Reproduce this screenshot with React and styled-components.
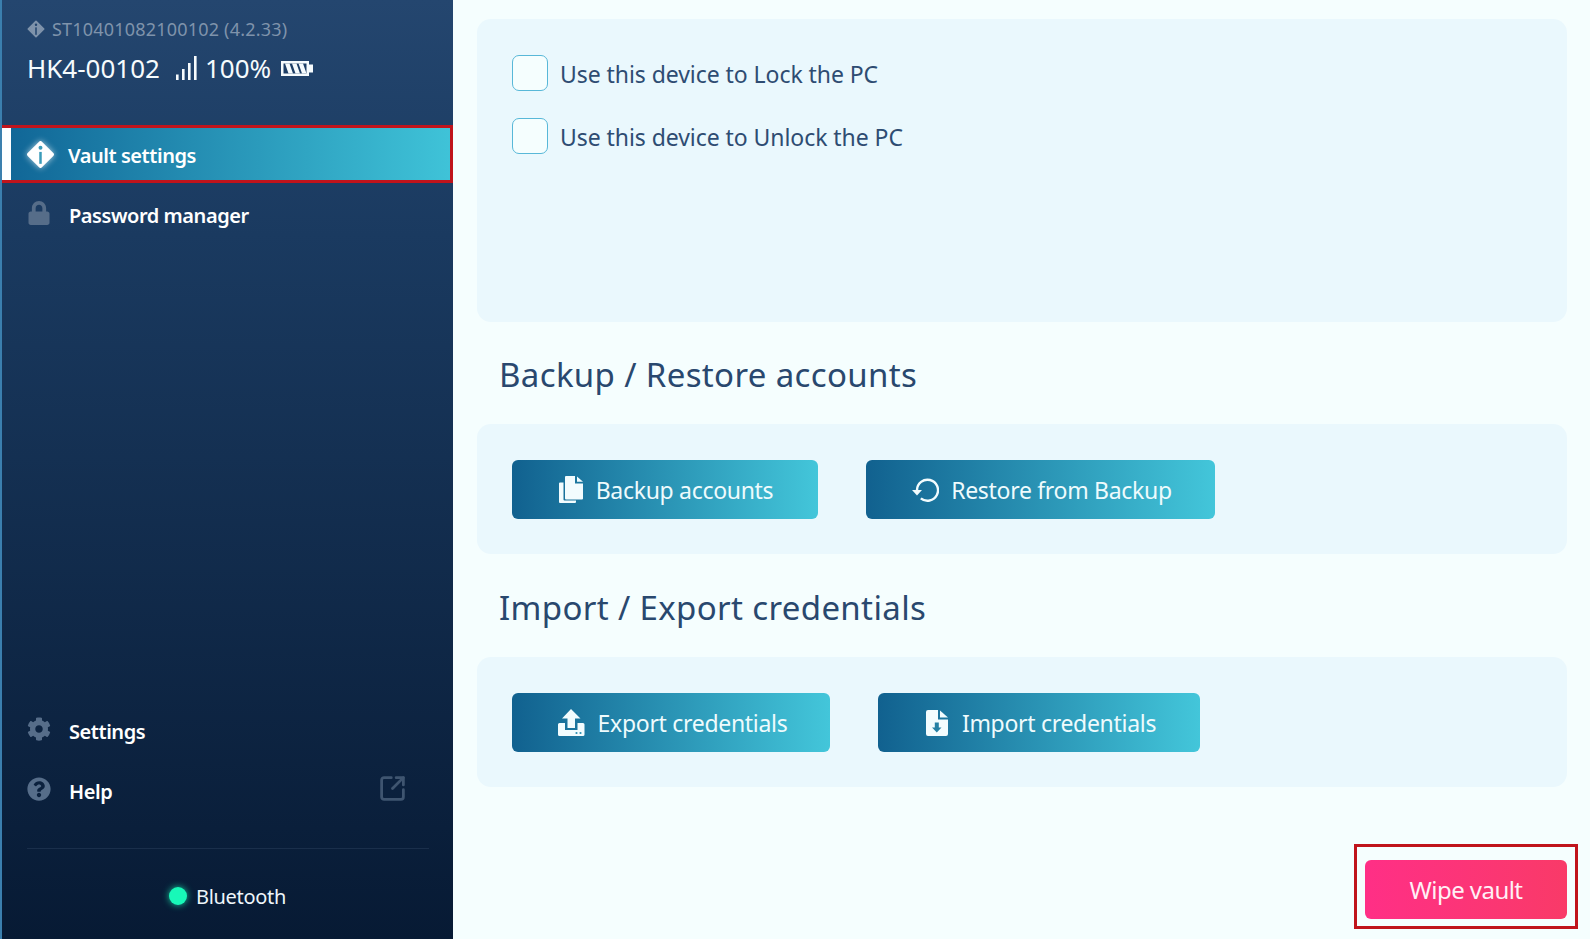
import React from "react";
import styled, { createGlobalStyle } from "styled-components";
import { FaLock, FaCog, FaQuestionCircle } from "react-icons/fa";
import { SquareArrowOutUpRight } from "lucide-react";

const Global = createGlobalStyle`
  html, body { margin: 0; padding: 0; height: 100%; overflow: hidden; }
  body { font-family: "Noto Sans", "Open Sans", "Liberation Sans", sans-serif; background: #f5fefe; }
`;
const Page = styled.div`display: flex; width: 1590px; height: 939px; overflow: hidden;`;
const Sidebar = styled.aside`
  width: 453px; height: 939px; flex: none; display: flex; flex-direction: column; box-sizing: border-box;
  background: linear-gradient(180deg, #24466f 0%, #1a3a60 25%, #071a34 100%);
  border-left: 2px solid #3b7fae; color: #fff;
`;
const Head = styled.div`padding: 17px 0 0 25px; height: 125px; box-sizing: border-box; flex: none;`;
const Serial = styled.div`display: flex; align-items: center; gap: 7px; font-size: 18px; line-height: 24px; color: #7f93ab; letter-spacing: 0.2px;`;
const DeviceRow = styled.div`display: flex; align-items: center; margin-top: 10px; font-size: 26px; line-height: 34px; color: #f6fbfd;`;
const DeviceName = styled.span`margin-right: 16px;`;
const Percent = styled.span`margin: 0 10px 0 8px;`;
const Nav = styled.nav`display: flex; flex-direction: column;`;
const NavItem = styled.div`
  display: flex; align-items: center; box-sizing: border-box; height: 60px; padding-left: 25px; font-size: 20px; font-weight: 600; letter-spacing: -0.45px; color: #fff;
`;
const ActiveItem = styled(NavItem)`
  height: 58px; width: 451px; margin-bottom: 2px; padding: 2px 0 0 23px;
  background: linear-gradient(90deg, #106596 0%, #3fc3d8 100%);
  border: 3px solid #c0141c; border-left: 0; box-shadow: inset 9px 0 0 #fdfeff;
`;
const NavIcon = styled.span`width: 42px; flex: none; display: flex; align-items: center; color: #566d89; font-size: 24px; position: relative; top: -2px;`;
const ActiveIcon = styled(NavIcon)`width: 42px; top: -1px; margin-left: 1px; filter: drop-shadow(0 0 3px #ffffffb0);`;
const Grow = styled.div`flex: 1;`;
const External = styled.span`margin-left: auto; margin-right: 46px; color: #3f5570; display: flex; position: relative; top: -3px;`;
const Divider = styled.div`height: 1px; margin: 27px 24px 0 25px; background: #1a2f4b;`;
const Status = styled.div`display: flex; justify-content: center; align-items: center; gap: 9px; height: 90px; padding: 4px 0 0 0; box-sizing: border-box; font-size: 20px; letter-spacing: -0.3px; color: #eef6fb;`;
const Dot = styled.span`width: 18px; height: 18px; border-radius: 50%; background: #18f8b8; box-shadow: 0 0 7px #18f8b8cc;`;
const Main = styled.main`flex: 1; box-sizing: border-box; padding: 19px 23px 0 24px; display: flex; flex-direction: column;`;
const Card = styled.section`
  box-sizing: border-box; height: ${p => p.$h}px; border-radius: 14px; background: #eaf8fd; padding: 36px 35px;
  display: flex; ${p => p.$col ? "flex-direction: column; gap: 27px;" : "gap: 48px;"}
`;
const Heading = styled.h2`margin: 0; height: ${p => p.$h}px; box-sizing: border-box; padding: ${p => p.$h - 72}px 0 0 22px; font-size: 33px; line-height: 46px; font-weight: 400; color: #29486e; letter-spacing: 0.36px;`;
const Check = styled.label`display: flex; align-items: center; gap: 12px; font-size: 23px; line-height: 36px; color: #2e4c72; letter-spacing: -0.06px;`;
const CheckText = styled.span`position: relative; top: 1px;`;
const Box = styled.span`width: 36px; height: 36px; box-sizing: border-box; border: 1.5px solid #58b8d8; border-radius: 7px; background: #f5fefe;`;
const Button = styled.button`
  height: 59px; width: ${p => p.$w}px; flex: none; border: 0; border-radius: 6px; display: flex; align-items: center; justify-content: center; gap: ${p => p.$gap || 12.5}px;
  background: linear-gradient(90deg, #11618f 0%, #43c6da 100%); color: #eefbfd; font: 400 23px "Noto Sans", sans-serif; letter-spacing: -0.3px; padding: 0 0 0 ${p => p.$pl || 2.5}px;
`;
const Footer = styled.div`display: flex; justify-content: flex-end; margin-top: 57px; margin-right: -11px;`;
const WipeFrame = styled.div`border: 3px solid #c0141c; padding: 13px 8px 7px; display: flex;`;
const WipeButton = styled.button`
  width: 202px; height: 59px; border: 0; border-radius: 6px; background: linear-gradient(90deg, #ff2f86 0%, #f93a68 100%); color: #fff0f6; font: 400 24px "Noto Sans", sans-serif; letter-spacing: -0.55px; padding: 0;
`;

const Diamond = ({ size, color, info, inset = 3 }) => (
  <svg width={size} height={size} viewBox="0 0 28 28">
    <path d={`M14 ${inset} ${28 - inset} 14 14 ${28 - inset} ${inset} 14Z`} fill={color} stroke={color} strokeWidth={inset * 1.3} strokeLinejoin="round" />
    <circle cx="14" cy="7.5" r="1.9" fill={info} />
    <rect x="12.800" y="11.500" width="2.400" height="11.500" fill={info} />
  </svg>
);
const Signal = () => (
  <svg width="21" height="24" viewBox="0 0 21 24" fill="#f6fbfd">
    <rect x="0" y="18.500" width="2.600" height="5.500" />
    <rect x="6" y="13" width="2.600" height="11" />
    <rect x="12" y="7" width="2.600" height="17" />
    <rect x="18" y="0" width="2.600" height="24" />
  </svg>
);
const Battery = () => (
  <svg width="32" height="15" viewBox="0 0 32 15">
    <rect x="0" y="0" width="28" height="15" fill="#f6fbfd" />
    <rect x="2.500" y="2.500" width="23" height="10" fill="#1d3e66" />
    <path d="M4 2.500h4.500l3.500 10H7.500zM11 2.500h4.500l3.500 10h-4.500zM17.500 2.500h4.500l3.500 10h-4.500z" fill="#f6fbfd" />
    <rect x="28" y="3.500" width="4" height="8" fill="#f6fbfd" />
  </svg>
);
const CopyIcon = () => (
  <svg width="24" height="27" viewBox="0 0 24 27" fill="#f2fcfe">
    <path d="M1 6.500H4.500V23.500A1 1 0 0 0 5.500 24.500H17V26A1 1 0 0 1 16 27H1A1 1 0 0 1 0 26V7.500A1 1 0 0 1 1 6.500Z" />
    <path d="M7 0H16V7.500H24V22.500A1 1 0 0 1 23 23.500H7A1 1 0 0 1 6 22.500V1A1 1 0 0 1 7 0Z" />
    <path d="M18 0.500 24 5.800H18Z" />
  </svg>
);
const RestoreIcon = () => (
  <svg width="27" height="25" viewBox="0 0 27 25" fill="none">
    <path d="M5 13A10.500 10.500 0 1 1 8.800 21.300" stroke="#f2fcfe" strokeWidth="2.400" />
    <path d="M0 13H10L5 18.500Z" fill="#f2fcfe" />
  </svg>
);
const ExportIcon = () => (
  <svg width="28" height="27" viewBox="0 0 28 27" fill="#f2fcfe">
    <path d="M14 0 23.500 9.500H18V19H10.500V9.500H5Z" />
    <path d="M1 15.500A1.500 1.500 0 0 1 2.500 14H8V21H20.500V14H26A1.500 1.500 0 0 1 27.500 15.500V25.500A1.500 1.500 0 0 1 26 27H2.500A1.500 1.500 0 0 1 1 25.500Z" />
    <circle cx="19.500" cy="24" r="1.100" fill="#2b8fb2" /><circle cx="23.500" cy="24" r="1.100" fill="#2b8fb2" />
  </svg>
);
const ImportIcon = () => (
  <svg width="22" height="26" viewBox="0 0 22 26" fill="#f2fcfe">
    <path d="M2 0H12V9.500H22V24A2 2 0 0 1 20 26H2A2 2 0 0 1 0 24V2A2 2 0 0 1 2 0Z" />
    <path d="M14 0.500 22 7.500H14Z" />
    <path d="M8.800 12.500H12.800V17.500H15.500L10.800 22.500 6 17.500H8.800Z" fill="#2480a4" />
  </svg>
);

export default function App() {
  return (
    <Page>
      <Global />
      <Sidebar>
        <Head>
          <Serial><Diamond size={18} color="#7f93ab" info="#24466f" inset={2} />ST10401082100102 (4.2.33)</Serial>
          <DeviceRow>
            <DeviceName>HK4-00102</DeviceName>
            <Signal />
            <Percent>100%</Percent>
            <Battery />
          </DeviceRow>
        </Head>
        <Nav>
          <ActiveItem>
            <ActiveIcon><Diamond size={29} color="#fff" info="#3a9bb9" /></ActiveIcon>
            Vault settings
          </ActiveItem>
          <NavItem><NavIcon><FaLock /></NavIcon>Password manager</NavItem>
        </Nav>
        <Grow />
        <Nav>
          <NavItem><NavIcon><FaCog /></NavIcon>Settings</NavItem>
          <NavItem>
            <NavIcon><FaQuestionCircle /></NavIcon>Help
            <External><SquareArrowOutUpRight size={29} strokeWidth={2.3} /></External>
          </NavItem>
        </Nav>
        <Divider />
        <Status><Dot />Bluetooth</Status>
      </Sidebar>
      <Main>
        <Card $h={303} $col>
          <Check><Box /><CheckText>Use this device to Lock the PC</CheckText></Check>
          <Check><Box /><CheckText>Use this device to Unlock the PC</CheckText></Check>
        </Card>
        <Heading $h={102}>Backup / Restore accounts</Heading>
        <Card $h={130}>
          <Button $w={306}><CopyIcon />Backup accounts</Button>
          <Button $w={349}><RestoreIcon />Restore from Backup</Button>
        </Card>
        <Heading $h={103}>Import / Export credentials</Heading>
        <Card $h={130}>
          <Button $w={318}><ExportIcon />Export credentials</Button>
          <Button $w={322} $gap={14} $pl={4}><ImportIcon />Import credentials</Button>
        </Card>
        <Footer>
          <WipeFrame><WipeButton>Wipe vault</WipeButton></WipeFrame>
        </Footer>
      </Main>
    </Page>
  );
}
